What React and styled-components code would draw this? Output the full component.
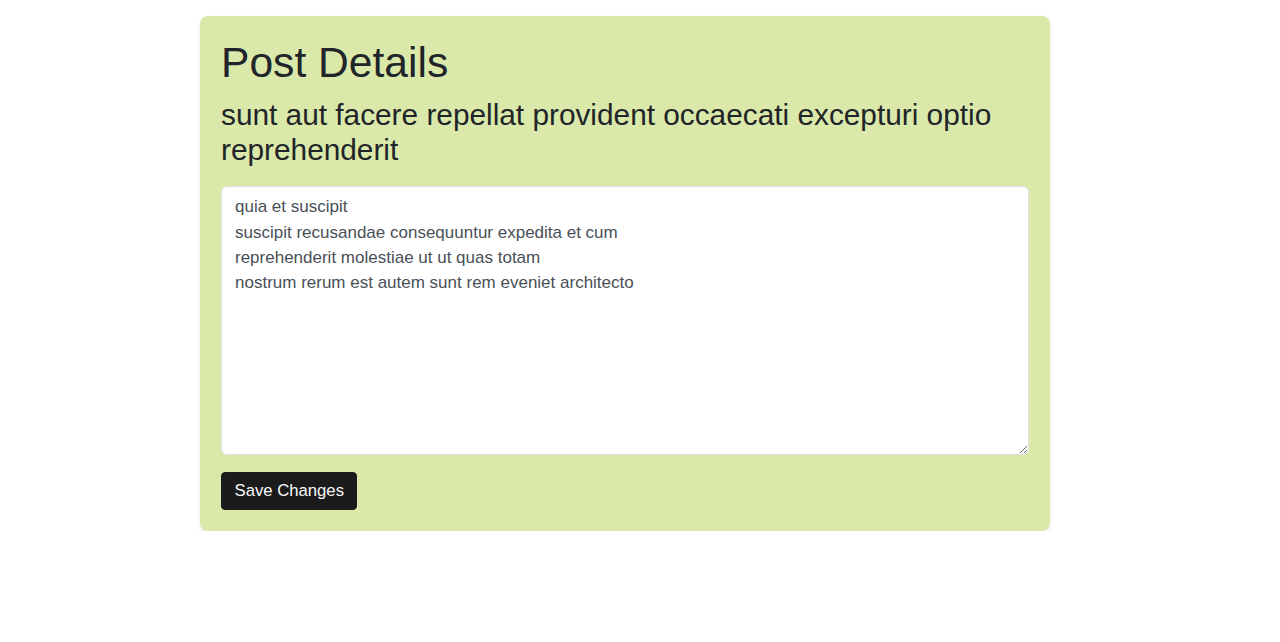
import React from 'react'
import styled, { createGlobalStyle } from 'styled-components'

const GlobalStyle = createGlobalStyle`
    body {
        margin: 0;
        background: #ffffff;
        font-family: "Liberation Sans", Arial, sans-serif;
        color: #212529;
    }
`

const Page = styled.div`
    padding: 16px 0 0 200px;
`

const Card = styled.div`
    width: 850px;
    box-sizing: border-box;
    padding: 21px;
    background-color: #dae9a9;
    border-radius: 8px;
    box-shadow: 0 2px 4px rgba(0, 0, 0, 0.09);
`

const Title = styled.h1`
    margin: 0 0 10.4px 0;
    font-size: 42.6px;
    font-weight: 400;
    line-height: 51.1px;
`

const Subtitle = styled.h3`
    margin: 0 0 18px 0;
    font-size: 29.8px;
    font-weight: 400;
    line-height: 34.7px;
`

const Body = styled.textarea`
    display: block;
    width: 100%;
    height: 269px;
    box-sizing: border-box;
    padding: 7.5px 13px;
    margin: 0;
    font-family: "Liberation Sans", Arial, sans-serif;
    font-size: 17px;
    line-height: 25.3px;
    color: #495057;
    background: #ffffff;
    border: 1px solid #dee2e6;
    border-radius: 6px;
    resize: vertical;

    &:focus {
        outline: none;
    }
`

const Button = styled.button`
    display: block;
    margin-top: 17px;
    height: 38px;
    padding: 0 12.5px;
    font-family: "Liberation Sans", Arial, sans-serif;
    font-size: 16.7px;
    color: #f8f9fa;
    background-color: #1b1b1b;
    border: 1px solid #1b1b1b;
    border-radius: 4px;
    cursor: pointer;
`

const post = {
    title: 'sunt aut facere repellat provident occaecati excepturi optio reprehenderit',
    body: 'quia et suscipit\nsuscipit recusandae consequuntur expedita et cum\nreprehenderit molestiae ut ut quas totam\nnostrum rerum est autem sunt rem eveniet architecto',
}

export default function App() {
    return (
        <Page>
            <GlobalStyle />
            <Card>
                <Title>Post Details</Title>
                <Subtitle>{ post.title }</Subtitle>
                <Body defaultValue={ post.body } />
                <Button>Save Changes</Button>
            </Card>
        </Page>
    )
}
